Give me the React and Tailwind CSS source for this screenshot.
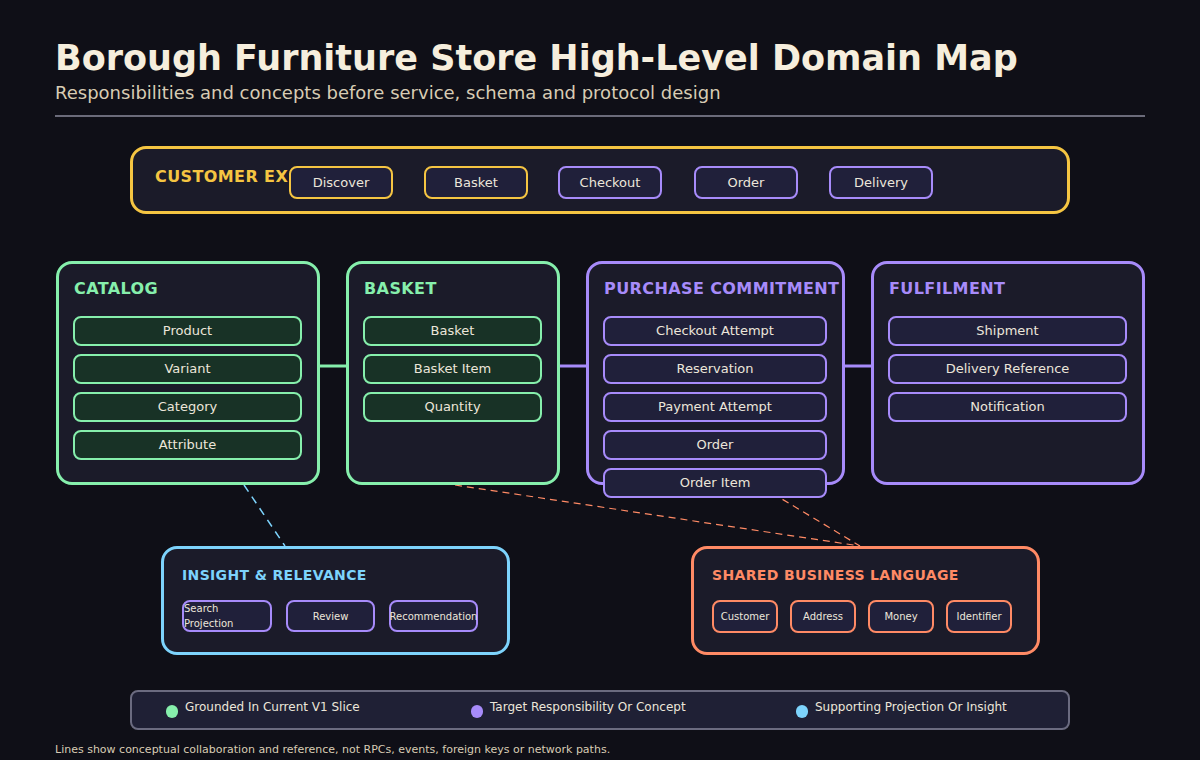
const font = { fontFamily: '"DejaVu Sans", "Liberation Sans", sans-serif' };

function Pill({ x, y, w, h = 30, border, bg = 'bg-[#20203a]', text = 'text-[13px]', children }) {
  return (
    <div
      className={`absolute flex items-center justify-center rounded-lg border-2 ${border} ${bg} ${text} text-[#ece6da]`}
      style={{ left: x, top: y, width: w, height: h }}
    >
      {children}
    </div>
  );
}

function Box({ x, y, w, h, border, color, title }) {
  return (
    <div
      className={`absolute rounded-2xl border-[3px] ${border} bg-[#1b1b29]`}
      style={{ left: x, top: y, width: w, height: h }}
    >
      <div className={`absolute left-[15px] top-[13px] text-[16px] font-bold tracking-wide ${color}`}>{title}</div>
    </div>
  );
}

export default function App() {
  const catalog = ['Product', 'Variant', 'Category', 'Attribute'];
  const basket = ['Basket', 'Basket Item', 'Quantity'];
  const purchase = ['Checkout Attempt', 'Reservation', 'Payment Attempt', 'Order', 'Order Item'];
  const fulfil = ['Shipment', 'Delivery Reference', 'Notification'];
  const journey = [
    ['Discover', 289, 'border-[#f5c542]'],
    ['Basket', 424, 'border-[#f5c542]'],
    ['Checkout', 558, 'border-[#a78bfa]'],
    ['Order', 694, 'border-[#a78bfa]'],
    ['Delivery', 829, 'border-[#a78bfa]'],
  ];

  return (
    <div className="relative w-[1200px] h-[760px] overflow-hidden bg-[#0f0f17]" style={font}>
      <div className="absolute left-[55px] top-[32px] text-[35px] font-bold text-[#f6eedd]">Borough Furniture Store High-Level Domain Map</div>
      <div className="absolute left-[55px] top-[79px] text-[18px] text-[#d8ccb4]">Responsibilities and concepts before service, schema and protocol design</div>
      <div className="absolute left-[55px] top-[115px] w-[1090px] h-[2px] bg-[#6b6b7a]" />

      <svg className="absolute left-0 top-0" width="1200" height="760">
        <line x1="320" y1="366" x2="346" y2="366" stroke="#86efac" strokeWidth="3" />
        <line x1="560" y1="366" x2="586" y2="366" stroke="#a78bfa" strokeWidth="3" />
        <line x1="845" y1="366" x2="871" y2="366" stroke="#a78bfa" strokeWidth="3" />
        <line x1="244" y1="485" x2="285" y2="546" stroke="#7dd3fc" strokeWidth="1.5" strokeDasharray="8 6" />
        <line x1="455" y1="485" x2="860" y2="546" stroke="#ff8a65" strokeWidth="1.2" strokeDasharray="7 5" />
        <line x1="762" y1="487" x2="860" y2="546" stroke="#ff8a65" strokeWidth="1.2" strokeDasharray="7 5" />
      </svg>

      <div className="absolute left-[130px] top-[146px] w-[940px] h-[68px] rounded-2xl border-[3px] border-[#f5c542] bg-[#1b1b29]">
        <div className="absolute left-[22px] top-[16px] text-[16px] font-bold tracking-wide text-[#f5c542]">CUSTOMER EX</div>
      </div>
      {journey.map(([t, x, b]) => (
        <Pill key={t} x={x} y={166} w={104} h={33} border={b}>{t}</Pill>
      ))}

      <Box x={56} y={261} w={264} h={224} border="border-[#86efac]" color="text-[#86efac]" title="CATALOG" />
      {catalog.map((t, i) => (
        <Pill key={t} x={73} y={316 + i * 38} w={229} border="border-[#86efac]" bg="bg-[#183226]">{t}</Pill>
      ))}

      <Box x={346} y={261} w={214} h={224} border="border-[#86efac]" color="text-[#86efac]" title="BASKET" />
      {basket.map((t, i) => (
        <Pill key={t} x={363} y={316 + i * 38} w={179} border="border-[#86efac]" bg="bg-[#183226]">{t}</Pill>
      ))}

      <Box x={586} y={261} w={259} h={224} border="border-[#a78bfa]" color="text-[#a78bfa]" title="PURCHASE COMMITMENT" />
      {purchase.map((t, i) => (
        <Pill key={t} x={603} y={316 + i * 38} w={224} border="border-[#a78bfa]">{t}</Pill>
      ))}

      <Box x={871} y={261} w={274} h={224} border="border-[#a78bfa]" color="text-[#a78bfa]" title="FULFILMENT" />
      {fulfil.map((t, i) => (
        <Pill key={t} x={888} y={316 + i * 38} w={239} border="border-[#a78bfa]">{t}</Pill>
      ))}

      <div className="absolute left-[161px] top-[546px] w-[349px] h-[109px] rounded-2xl border-[3px] border-[#7dd3fc] bg-[#1b1b29]">
        <div className="absolute left-[18px] top-[16px] text-[14px] font-bold tracking-wide text-[#7dd3fc]">INSIGHT &amp; RELEVANCE</div>
      </div>
      <Pill x={182} y={600} w={90} h={32} border="border-[#a78bfa]" text="text-[10px]">Search Projection</Pill>
      <Pill x={286} y={600} w={89} h={32} border="border-[#a78bfa]" text="text-[10px]">Review</Pill>
      <Pill x={389} y={600} w={89} h={32} border="border-[#a78bfa]" text="text-[10px]">Recommendation</Pill>

      <div className="absolute left-[691px] top-[546px] w-[349px] h-[109px] rounded-2xl border-[3px] border-[#ff8a65] bg-[#1b1b29]">
        <div className="absolute left-[18px] top-[16px] text-[14px] font-bold tracking-wide text-[#ff8a65]">SHARED BUSINESS LANGUAGE</div>
      </div>
      {[['Customer', 712], ['Address', 790], ['Money', 868], ['Identifier', 946]].map(([t, x]) => (
        <Pill key={t} x={x} y={600} w={66} h={33} border="border-[#ff8a65]" text="text-[10px]">{t}</Pill>
      ))}

      <div className="absolute left-[130px] top-[690px] w-[940px] h-[40px] rounded-lg border-2 border-[#6b6b80] bg-[#1f2035]">
        {[['Grounded In Current V1 Slice', 34, 'bg-[#86efac]'], ['Target Responsibility Or Concept', 339, 'bg-[#a78bfa]'], ['Supporting Projection Or Insight', 664, 'bg-[#7dd3fc]']].map(([t, x, c]) => (
          <div key={t} className="absolute top-[6px] flex items-start gap-[7px]" style={{ left: x }}>
            <div className={`mt-[7px] w-[12px] h-[13px] rounded-full ${c}`} />
            <span className="text-[12px] text-[#ece6da]">{t}</span>
          </div>
        ))}
      </div>

      <div className="absolute left-[55px] top-[742px] text-[11px] text-[#d8ccb4]">Lines show conceptual collaboration and reference, not RPCs, events, foreign keys or network paths.</div>
    </div>
  );
}
